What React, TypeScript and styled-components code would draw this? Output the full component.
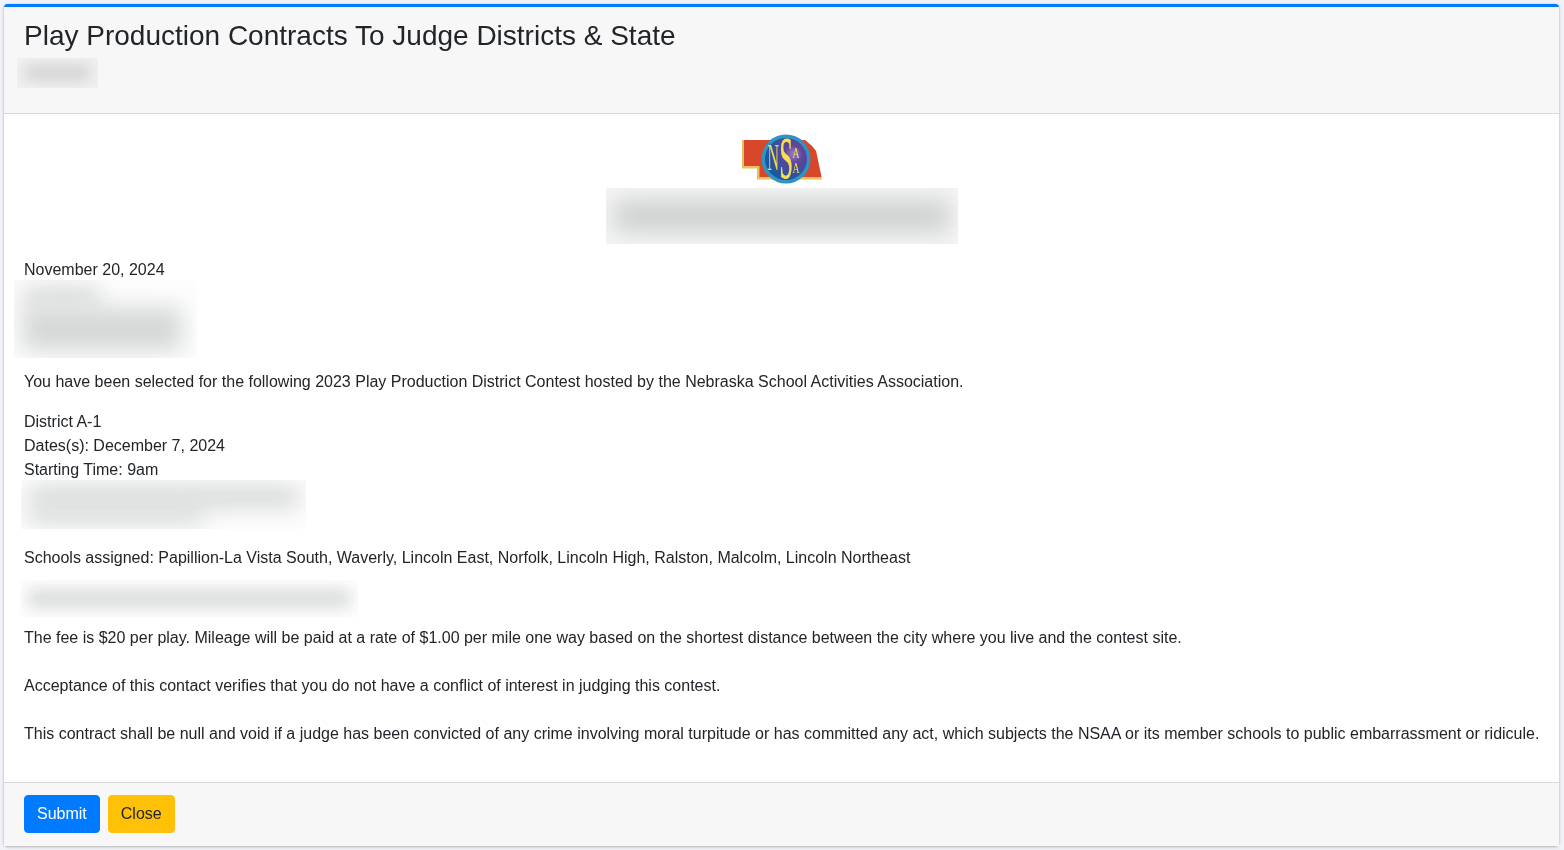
import React from "react";
import styled, { createGlobalStyle } from "styled-components";

const GlobalStyle = createGlobalStyle`
  html, body {
    margin: 0;
    padding: 0;
    background: #f0f2f7;
  }

  body {
    font-family: "Liberation Sans", Arial, sans-serif;
    font-size: 16px;
    line-height: 24px;
    color: #212529;
  }
`;

const Page = styled.div`
  height: 850px;
  padding: 4px 5px 4px 4px;
  box-sizing: border-box;
  overflow: hidden;
`;

const Card = styled.div`
  display: flex;
  flex-direction: column;
  height: 842px;
  box-sizing: border-box;
  background: white;
  border-top: 3px solid #007bff;
  border-radius: 4px;
  box-shadow: 0 0 1px rgba(0, 0, 0, 0.3), 0 1px 3px rgba(0, 0, 0, 0.25);
  will-change: transform;
`;

const CardHeader = styled.div`
  flex: none;
  height: 107px;
  box-sizing: border-box;
  padding: 12px 20px 0;
  background: #f7f7f7;
  border-bottom: 1px solid #d9d9d9;
`;

const Title = styled.h3`
  margin: 0;
  font-size: 28px;
  font-weight: 400;
  line-height: 33.6px;
  color: #212529;
`;

const CardBody = styled.div`
  flex: 1;
  padding: 20px 19px 0 20px;
`;

const LogoRow = styled.div`
  display: flex;
  flex-direction: column;
  align-items: center;
`;

const Logo = styled.svg`
  display: block;
  width: 80px;
  height: 50px;
  margin-bottom: 4px;
  overflow: visible;
`;

const Patch = styled.div<{ $width: number; $height: number; $left?: number; $top?: number; $bottom?: number; $tone?: string }>`
  display: flex;
  flex-direction: column;
  justify-content: center;
  box-sizing: border-box;
  width: ${(p) => p.$width}px;
  height: ${(p) => p.$height}px;
  margin-left: ${(p) => p.$left ?? 0}px;
  margin-top: ${(p) => p.$top ?? 0}px;
  margin-bottom: ${(p) => p.$bottom ?? 0}px;
  padding: 0 8px;
  overflow: hidden;
  background: ${(p) => p.$tone ?? "#fdfdfd"};
`;

const Smear = styled.div<{ $height: number; $blur?: number; $tone?: string }>`
  height: ${(p) => p.$height}px;
  flex: none;
  background: ${(p) => p.$tone ?? "#d6d8d8"};
  filter: blur(${(p) => p.$blur ?? 11}px);
`;

const Para = styled.p<{ $bottom?: number }>`
  margin: 0 0 ${(p) => p.$bottom ?? 16}px;
`;

const DateLine = styled.div`
  margin-top: 14px;
`;

const Line = styled.div``;

const CardFooter = styled.div`
  flex: none;
  display: flex;
  gap: 8px;
  height: 64px;
  box-sizing: border-box;
  padding: 12px 20px;
  background: #f7f7f7;
  border-top: 1px solid #d9d9d9;
`;

const Button = styled.button<{ $variant: "primary" | "warning" }>`
  height: 38px;
  padding: 0 12px;
  font-family: inherit;
  font-size: 16px;
  line-height: 24px;
  border: 1px solid ${(p) => (p.$variant === "primary" ? "#007bff" : "#ffc107")};
  border-radius: 4px;
  background: ${(p) => (p.$variant === "primary" ? "#007bff" : "#ffc107")};
  color: ${(p) => (p.$variant === "primary" ? "white" : "#212529")};
`;

function NsaaLogo() {
  const serif = "Liberation Serif, serif";
  return (
    <Logo viewBox="0 0 80 50">
      <defs>
        <radialGradient id="globe" cx="68%" cy="38%" r="70%">
          <stop offset="0%" stopColor="#9a80c8" />
          <stop offset="30%" stopColor="#5f459c" />
          <stop offset="100%" stopColor="#15599f" />
        </radialGradient>
      </defs>
      <path d="M0 6H63L70 12L74 17L80 45.5H15V34.5H0Z" fill="#e3c25c" />
      <path d="M2 6H63L70 12L74 17L79.5 43H17.5V32H2Z" fill="#d9472a" />
      <circle cx="44" cy="25" r="24.5" fill="#2f93c4" />
      <circle cx="44" cy="25" r="21" fill="url(#globe)" />
      <text transform="translate(25.5 36) scale(1 2.35)" fontFamily={serif} fontSize="16" fill="#efd84a">
        N
      </text>
      <text transform="translate(37.5 44) scale(1.2 3)" fontFamily={serif} fontSize="20" fill="#f6e14e" stroke="#f6e14e" strokeWidth="0.25">
        S
      </text>
      <text transform="translate(50.5 23.5) scale(0.75 1.2)" fontFamily={serif} fontSize="13" fill="#f6e14e">
        A
      </text>
      <text transform="translate(50.5 39) scale(0.75 1.2)" fontFamily={serif} fontSize="13" fill="#f6e14e">
        A
      </text>
    </Logo>
  );
}

export default function App() {
  return (
    <>
      <GlobalStyle />
      <Page>
        <Card>
          <CardHeader>
            <Title>Play Production Contracts To Judge Districts &amp; State</Title>
            <Patch $width={81} $height={30} $left={-7} $top={5.4} $tone="#f1f1f1">
              <Smear $height={16} $blur={7} $tone="#d2d3d3" />
            </Patch>
          </CardHeader>
          <CardBody>
            <LogoRow>
              <NsaaLogo />
              <Patch $width={352} $height={56} $tone="#f5f5f5">
                <Smear $height={34} $tone="#d0d2d2" />
              </Patch>
            </LogoRow>
            <DateLine>November 20, 2024</DateLine>
            <Patch $width={183} $height={78} $left={-10} $top={-2} $bottom={12}>
              <Smear $height={20} style={{ width: 78 }} />
              <Smear $height={44} style={{ width: 160 }} />
            </Patch>
            <Para>
              You have been selected for the following 2023 Play Production District Contest hosted by the Nebraska School Activities Association.
            </Para>
            <Line>District A-1</Line>
            <Line>Dates(s): December 7, 2024</Line>
            <Line>Starting Time: 9am</Line>
            <Patch $width={285} $height={49} $left={-3} $top={-2} $bottom={17}>
              <Smear $height={22} style={{ width: 270 }} />
              <Smear $height={16} style={{ width: 175 }} />
            </Patch>
            <Para $bottom={10}>
              Schools assigned: Papillion-La Vista South, Waverly, Lincoln East, Norfolk, Lincoln High, Ralston, Malcolm, Lincoln Northeast
            </Para>
            <Patch $width={338} $height={37} $left={-4} $bottom={9}>
              <Smear $height={17} $blur={8} />
            </Patch>
            <Para $bottom={24}>
              The fee is $20 per play. Mileage will be paid at a rate of $1.00 per mile one way based on the shortest distance between the city where you live and the contest site.
            </Para>
            <Para $bottom={24}>
              Acceptance of this contact verifies that you do not have a conflict of interest in judging this contest.
            </Para>
            <Para>
              This contract shall be null and void if a judge has been convicted of any crime involving moral turpitude or has committed any act, which subjects the NSAA or its member schools to public embarrassment or ridicule.
            </Para>
          </CardBody>
          <CardFooter>
            <Button $variant="primary">Submit</Button>
            <Button $variant="warning">Close</Button>
          </CardFooter>
        </Card>
      </Page>
    </>
  );
}
